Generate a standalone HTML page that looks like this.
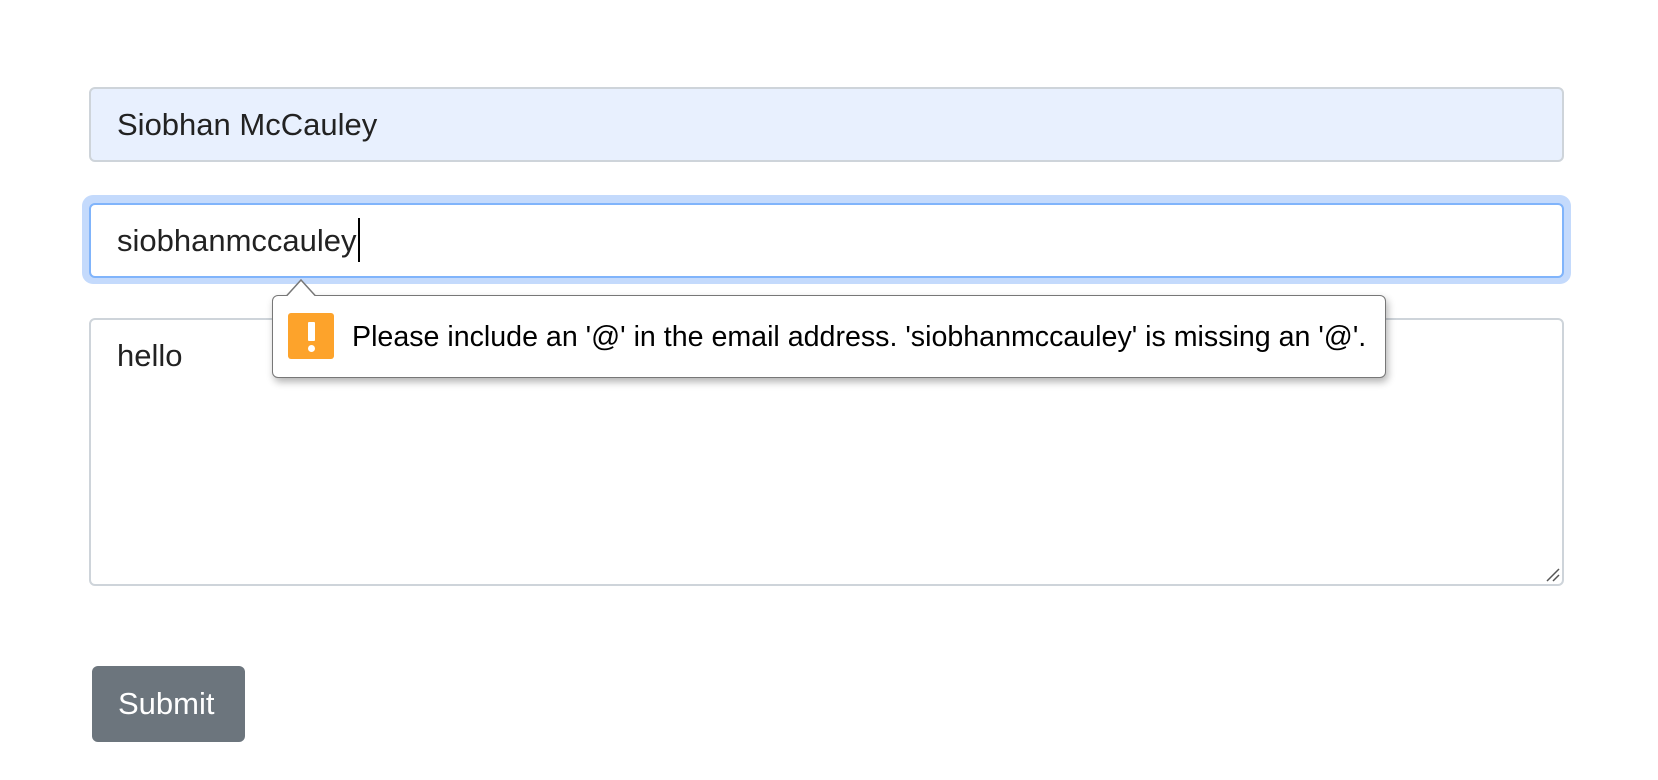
<!DOCTYPE html>
<html><head><style>
body{margin:0;width:1658px;height:780px;background:#fff;position:relative;overflow:hidden;font-family:"Liberation Sans",sans-serif;}
.box{position:absolute;box-sizing:border-box;border:2px solid #ced4da;border-radius:6px;}
.t{position:absolute;font-size:31px;color:#222;line-height:1;white-space:nowrap;}
</style></head><body>
<div class="box" style="left:89px;top:87px;width:1475px;height:75px;background:#e8f0fe;"></div>
<div class="t" style="left:117px;top:109px;">Siobhan McCauley</div>

<div style="position:absolute;left:82px;top:195px;width:1489px;height:89px;border-radius:11px;background:#c4dafc;"></div>
<div class="box" style="left:89px;top:203px;width:1475px;height:75px;background:#fff;border-color:#80b4fb;"></div>
<div class="t" style="left:117px;top:225px;">siobhanmccauley<span style="position:absolute;right:-3px;top:-7px;width:2px;height:44px;background:#000;"></span></div>

<div class="box" style="left:89px;top:318px;width:1475px;height:268px;background:#fff;"></div>
<div class="t" style="left:117px;top:340px;">hello</div>
<svg style="position:absolute;left:1545px;top:567px" width="16" height="16"><path d="M2 14L14 2M8 14L14 8" stroke="#555" stroke-width="1.5"/></svg>

<div style="position:absolute;left:272px;top:295px;width:1114px;height:83px;box-sizing:border-box;background:#fff;border:1.5px solid #777;border-radius:6px;box-shadow:2px 4px 8px rgba(0,0,0,.3);"></div>
<svg style="position:absolute;left:286px;top:277px" width="36" height="20"><path d="M0 19.5L15 3L30 19.5" fill="#fff" stroke="#777" stroke-width="1.5"/><rect x="0" y="19" width="36" height="2" fill="#fff"/></svg>
<div style="position:absolute;left:288px;top:313px;width:46px;height:46px;background:#fda32b;border-radius:3px;"></div>
<div style="position:absolute;left:308px;top:322px;width:7px;height:19px;background:#fff;border-radius:1px;"></div>
<div style="position:absolute;left:308px;top:345px;width:7px;height:7px;background:#fff;border-radius:50%;"></div>
<div style="position:absolute;left:352px;top:323px;font-size:28.6px;color:#000;white-space:nowrap;line-height:1;">Please include an '@' in the email address. 'siobhanmccauley' is missing an '@'.</div>

<div style="position:absolute;left:92px;top:666px;width:153px;height:76px;background:#6c757d;border-radius:6px;"></div>
<div class="t" style="left:118px;top:688px;color:#fff;">Submit</div>
</body></html>
